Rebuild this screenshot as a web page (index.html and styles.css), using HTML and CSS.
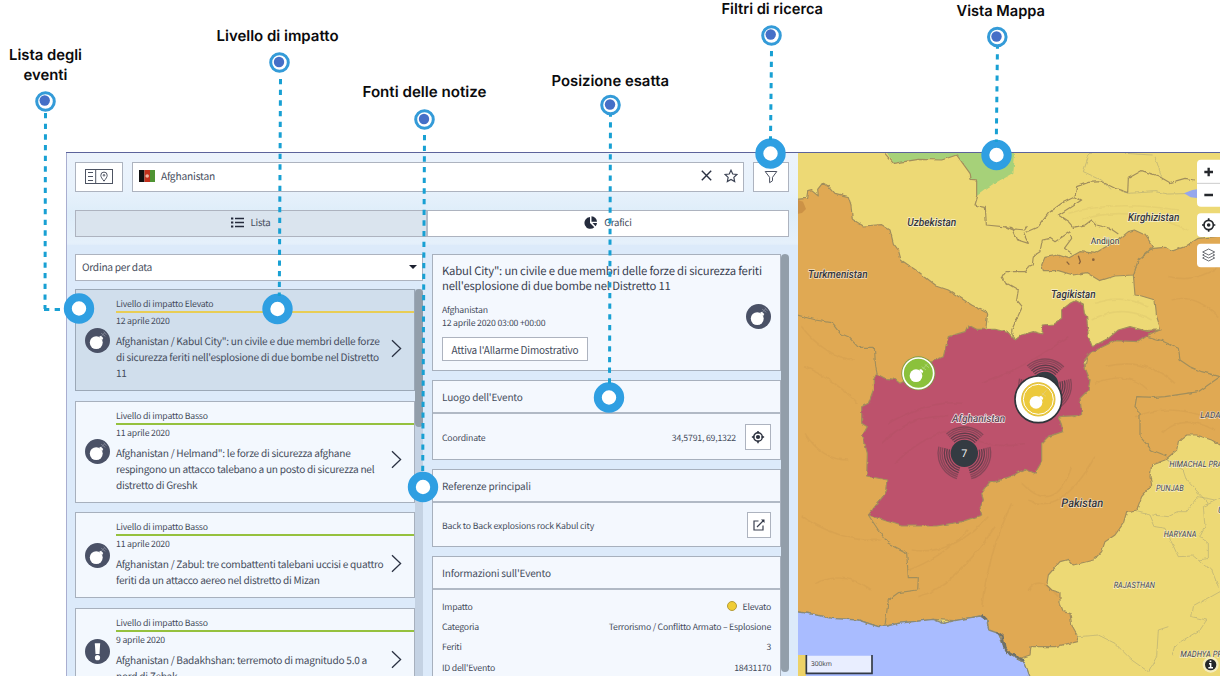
FILE: index.html
```html
<!DOCTYPE html>
<html lang="it">
<head>
<meta charset="utf-8">
<title>Mappa degli eventi</title>
<link rel="stylesheet" href="styles.css">
</head>
<body>
<svg class="defs" width="0" height="0">
  <symbol id="bomb" viewBox="0 0 24 24"><circle cx="12" cy="12" r="12" fill="#4a5166"/><circle cx="10.800" cy="14" r="6.200" fill="#fff"/><path d="M13.500 8.500l3 3 1-1.800-2.200-2.200z" fill="#fff"/><path d="M16 7.600l2.600-2.800M15.500 5l4 3M18 3.500l2.500 3" stroke="#7f8596" stroke-width=".9" fill="none"/></symbol>
  <symbol id="alert" viewBox="0 0 24 24"><circle cx="12" cy="12" r="12" fill="#4a5166"/><path d="M9.400 4h5.200l-.7 10.400h-3.800z" fill="#fff"/><circle cx="12" cy="17.900" r="2.500" fill="#fff"/></symbol>
  <symbol id="chevron" viewBox="0 0 11 19"><path d="M1 1.200l8.600 8.300L1 17.800" fill="none" stroke="#2a3142" stroke-width="1.300"/></symbol>
  <symbol id="target" viewBox="0 0 16 16"><circle cx="8" cy="8" r="4.900" fill="none" stroke="#2a2f3d" stroke-width="1.600"/><circle cx="8" cy="8" r="2.400" fill="#2a2f3d"/><path d="M8 1v3M8 12v3M1 8h3M12 8h3" stroke="#2a2f3d" stroke-width="1.700"/></symbol>
</svg>

<main class="app">
  <section class="panel">
    <div class="toolbar">
      <button class="box layout-btn"><svg width="28" height="15" viewBox="0 0 28 15" fill="none" stroke="#4d5362"><rect x=".5" y=".5" width="27" height="14"/><path d="M10.700 0v15M3 3.500h5M3 7.500h5M3 11.500h5"/><path d="M19 12.200C17 9.500 15.800 8 15.800 6.300a3.200 3.200 0 0 1 6.400 0C22.200 8 21 9.500 19 12.200z"/><circle cx="19" cy="6.300" r=".8"/></svg></button>
      <div class="box search">
        <svg class="flag" width="16" height="12" viewBox="0 0 16 12"><path fill="#111" d="M0 0h5.500v12H0z"/><path fill="#c3301c" d="M5.500 0h5.500v12H5.500z"/><path fill="#4f9433" d="M11 0h5v12h-5z"/><circle cx="8.200" cy="6" r="1.800" fill="#efb5a3"/></svg>
        <span>Afghanistan</span>
        <svg class="clear" width="11" height="11" viewBox="0 0 11 11"><path d="M.8.8l9.400 9.400M10.200.8L.8 10.200" stroke="#2a3142" stroke-width="1.400"/></svg>
        <svg width="14" height="14" viewBox="0 0 14 14"><path d="M7 1.200l1.750 3.800 4.100.5-3 2.850.8 4.150L7 10.400l-3.650 2.100.8-4.150-3-2.850 4.100-.5z" fill="none" stroke="#3c4354" stroke-width="1.200"/></svg>
      </div>
      <button class="box filter-btn"><svg width="14" height="14" viewBox="0 0 14 14"><path d="M1.200 1.500h11.600L8.500 7.300v3.500L5.600 12.700V7.300z" fill="none" stroke="#4a5060"/></svg></button>
    </div>
    <nav class="tabs">
      <div class="tab active"><svg width="13" height="11" viewBox="0 0 13 11"><path d="M4 1.500h9M4 5.500h9M4 9.500h9" stroke="#252b3c" stroke-width="1.500"/><path d="M0 1.500h2.300M0 5.500h2.300M0 9.500h2.300" stroke="#252b3c" stroke-width="2"/></svg><span>Lista</span></div>
      <div class="tab charts"><svg width="14" height="13" viewBox="0 0 14 13" fill="#252b3c"><path d="M6 1v6l4.300 4.300A5.900 5.900 0 1 1 6 1z"/><path d="M7.500.2A5.700 5.700 0 0 1 13 5.800H7.500z"/><path d="M8.500 7H13a5.500 5.500 0 0 1-1.500 3.200z"/></svg><span>Grafici</span></div>
    </nav>
    <div class="columns">
      <div class="list-col">
        <div class="box select"><span>Ordina per data</span><svg width="8" height="4" viewBox="0 0 8 4"><path d="M0 0h8L4 4z" fill="#1c2130"/></svg></div>
        <div class="list">
          <div class="cards">
            <article class="event selected"><svg class="ico" width="25" height="25"><use href="#bomb"/></svg>
              <div class="txt"><p class="level high">Livello di impatto Elevato</p><p class="date">12 aprile 2020</p><h3>Afghanistan / Kabul City": un civile e due membri delle forze<br>di sicurezza feriti nell'esplosione di due bombe nel Distretto<br>11</h3></div>
              <svg class="go" width="11" height="19"><use href="#chevron"/></svg></article>
            <article class="event"><svg class="ico" width="25" height="25"><use href="#bomb"/></svg>
              <div class="txt"><p class="level">Livello di impatto Basso</p><p class="date">11 aprile 2020</p><h3>Afghanistan / Helmand": le forze di sicurezza afghane<br>respingono un attacco talebano a un posto di sicurezza nel<br>distretto di Greshk</h3></div>
              <svg class="go" width="11" height="19"><use href="#chevron"/></svg></article>
            <article class="event"><svg class="ico" width="25" height="25"><use href="#bomb"/></svg>
              <div class="txt"><p class="level">Livello di impatto Basso</p><p class="date">11 aprile 2020</p><h3>Afghanistan / Zabul: tre combattenti talebani uccisi e quattro<br>feriti da un attacco aereo nel distretto di Mizan</h3></div>
              <svg class="go" width="11" height="19"><use href="#chevron"/></svg></article>
            <article class="event"><svg class="ico" width="25" height="25"><use href="#alert"/></svg>
              <div class="txt"><p class="level">Livello di impatto Basso</p><p class="date">9 aprile 2020</p><h3>Afghanistan / Badakhshan: terremoto di magnitudo 5.0 a<br>nord di Zebak</h3></div>
              <svg class="go" width="11" height="19"><use href="#chevron"/></svg></article>
          </div>
          <div class="track"><div class="thumb list-thumb"></div></div>
        </div>
      </div>
      <div class="detail-col">
        <div class="details">
          <section class="card summary">
            <h2>Kabul City": un civile e due membri delle forze di sicurezza feriti<br>nell'esplosione di due bombe nel Distretto 11</h2>
            <div class="meta"><p>Afghanistan<br>12 aprile 2020 03:00 +00:00</p><svg width="25" height="25"><use href="#bomb"/></svg></div>
            <button class="box alarm">Attiva l'Allarme Dimostrativo</button>
          </section>
          <section class="card group place">
            <h4>Luogo dell'Evento</h4>
            <div class="row"><span>Coordinate</span><span class="coord">34,5791, 69,1322</span><button class="box sq"><svg width="14" height="14"><use href="#target"/></svg></button></div>
          </section>
          <section class="card group refs">
            <h4>Referenze principali</h4>
            <div class="row"><span>Back to Back explosions rock Kabul city</span><button class="box sq ext"><svg width="12" height="12" viewBox="0 0 12 12" fill="none" stroke="#3a4050" stroke-width="1.200"><path d="M5.500 2H1v9h9V6.500M4 8l6.500-6.500"/><path d="M8 .5h3.500V4z" fill="#2a3142" stroke="none"/></svg></button></div>
          </section>
          <section class="card group info">
            <h4>Informazioni sull'Evento</h4>
            <dl>
              <div><dt>Impatto</dt><dd><i class="dot"></i>Elevato</dd></div>
              <div><dt>Categoria</dt><dd>Terrorismo / Conflitto Armato – Esplosione</dd></div>
              <div><dt>Feriti</dt><dd>3</dd></div>
              <div><dt>ID dell'Evento</dt><dd>18431170</dd></div>
            </dl>
          </section>
        </div>
        <div class="track clear-track"><div class="thumb detail-thumb"></div></div>
      </div>
    </div>
  </section>

  <section class="map">
    <svg width="422" height="523" viewBox="9 9 1266 1569">
      <defs>
        <filter id="rough" x="0" y="0" width="1" height="1" color-interpolation-filters="sRGB"><feTurbulence type="fractalNoise" baseFrequency=".045" numOctaves="3" seed="4" result="n"/><feDisplacementMap in="SourceGraphic" in2="n" scale="10" xChannelSelector="R" yChannelSelector="G"/></filter>
        <g id="waves"><circle r="46" pathLength="360"/><circle r="53" pathLength="360"/><circle r="60" pathLength="360"/><circle class="far" r="67" pathLength="360"/><circle class="far" r="73" pathLength="360"/><circle class="far" r="79" pathLength="360"/></g>
      </defs>
      <rect width="1300" height="1600" fill="#edd975"/>
      <g filter="url(#rough)" stroke="#a18e5c" stroke-width="3.500" stroke-linejoin="round">
        <rect x="-20" y="-20" width="1320" height="1620" fill="#edd975" stroke="none"/>
        <path fill="#a6d179" d="M265 -10L295 40 370 28 440 30 485 15 525 70 528 88 545 90 545 138 590 105 655 68 662 -10z" stroke="none"/>
        <path fill="none" d="M265 5L295 40 370 28 440 30 485 15 525 70 528 88 545 90 545 138 537 165 571 172 574 225 645 232 660 240M660 237L690 240 700 225"/>
        <path fill="#e0a953" d="M-20 150L35 145 38 125 50 122 70 138 68 118 82 100 104 112 120 130 160 140 168 165 172 208 205 228 260 224 285 240 295 280 310 300 318 330 370 365 425 408 460 420 530 465 578 490 572 540 600 700 840 800 880 600 960 556 1010 543 1085 540 1098 540 1085 500 1080 450 1040 438 1020 435 1015 375 1030 330 1075 295 1110 292 1135 302 1170 290 1210 265 1310 255 1310 905 1250 870 1205 855 1175 855 1150 875 1145 900 1110 930 1070 945 1065 980 1070 1005 1040 1040 1025 1080 995 1085 985 1120 960 1155 930 1175 920 1205 895 1230 835 1245 820 1228 795 1235 760 1275 755 1305 770 1320 795 1328 795 1360 805 1385 825 1390 830 1425 850 1460 845 1475 780 1490 708 1490 705 1515 660 1530 625 1500 582 1440 575 1410 555 1398 480 1412 415 1408 380 1412 310 1420 275 1428 250 1430 190 1410 110 1405 40 1390 -20 1383z"/>
        <path fill="#a9bcff" stroke="none" d="M-20 1383L40 1390 110 1405 190 1410 250 1430 275 1428 310 1420 380 1412 415 1408 445 1420 480 1412 555 1398 575 1410 582 1440 610 1450 625 1485 645 1515 690 1540 710 1600 -20 1600z"/>
        <path fill="none" stroke="#8a8a78" stroke-width="4" d="M-20 1383L40 1390 110 1405 190 1410 250 1430 275 1428 310 1420 380 1412 415 1408 445 1420 480 1412 555 1398 575 1410 582 1440 610 1450 625 1485 645 1515 690 1540 705 1580"/>
        <path fill="none" stroke="#6f7168" stroke-width="8" d="M560 1395L575 1410M605 1446L622 1458 628 1490 645 1512 688 1532"/>
        <path fill="#e0a953" d="M740 345L750 322 790 315 820 325 855 305 900 310 925 295 970 270 1000 245 1018 240 1050 255 1075 290 1030 330 1015 375 960 378 915 392 875 368 835 375 790 362 745 362z"/>
        <path fill="#bd526c" d="M220 1095L275 1025 278 990 215 978 217 910 203 855 217 830 200 820 200 770 220 760 235 720 235 690 245 672 270 685 300 688 315 700 335 690 400 640 445 620 460 560 510 545 520 525 545 538 600 538 640 548 660 570 680 555 715 545 740 552 745 525 775 522 800 505 800 480 825 460 840 452 865 465 868 490 875 500 880 560 892 590 940 565 970 540 1005 530 1060 545 1095 540 1060 555 1030 575 960 572 920 592 885 610 865 635 875 665 885 690 880 720 855 745 860 790 845 797 790 800 800 825 803 845 760 860 740 880 740 935 720 970 690 958 645 980 600 995 585 995 560 1030 565 1050 555 1075 560 1095 500 1115 425 1128 320 1128z"/>
        <g fill="none"><path d="M-10 490L60 510 110 518 135 550 160 560 190 592 238 592 242 650 247 675"/><path d="M220 1095L250 1140 280 1180 335 1208 340 1283 370 1283 368 1320 310 1328 280 1350 270 1425"/><path d="M630 365L690 365 700 350 712 345 715 318 735 305 742 270 765 265 780 275 825 245 830 265 808 295 830 310M630 230L655 240 668 270 700 280 685 250 730 230 760 190 800 160 840 140 860 150 790 195 820 215 835 232 870 225 890 210 905 225 945 235 970 252M840 140L845 110 880 97 920 95 960 115 998 128 1000 85 1040 62 1090 78 1125 98 1170 85 1200 90"/><path d="M635 400L670 420 665 450 682 470 650 540 660 570M1060 560L1100 572 1150 595 1155 630 1185 650 1220 665 1275 680M1275 680L1210 725 1110 740 1080 742 1025 740 1020 770 1035 785 1035 860 1070 900 1115 918M630 365L621 380 635 405"/></g>
        <g fill="none" stroke="#a39e77" stroke-width="2" opacity=".75"><path d="M890 9L880 20 865 65 920 90 945 118M985 125L1000 130 1080 125 1120 132 1210 130M990 10L1070 15M1080 20L1100 80"/><path d="M1025 1085L1065 1095 1080 1130 1110 1135 1150 1220 1195 1218 1210 1230 1240 1225 1240 1180 1215 1160 1230 1130 1225 1070 1275 1045M1075 1095L1120 1100 1150 1085 1175 1085 1195 1060 1210 1040 1260 1050M1115 930L1165 960 1175 990 1240 1060M1210 1230L1250 1260 1270 1310M850 1460L910 1455 960 1480 1010 1530 1060 1565 1085 1520 1090 1440 1120 1430M1275 1325L1195 1370 1190 1400 1235 1410 1215 1440 1140 1485 1130 1520"/></g>
      </g>
      <!-- Relief shading -->
      <g filter="url(#rough)" fill="none" stroke="#6b482e" opacity=".05" stroke-width="5"><path d="M30 650Q120 690 190 760M20 530Q90 620 180 630M30 850Q80 930 160 930M20 1100Q150 1180 260 1170M60 1300Q150 1260 230 1320M340 1260Q430 1230 520 1140M370 1340Q480 1310 600 1130M560 1370Q580 1210 650 1060M350 1200Q470 1220 580 1100M680 1000Q780 1100 830 950M700 1050Q800 1100 900 920M790 1340Q730 1270 700 1320M260 880Q350 790 460 800M280 820Q400 750 500 760M300 940Q400 840 520 830M560 700Q680 660 820 560M520 860Q600 900 690 880M900 700Q1000 660 1060 720M930 650Q1050 620 1140 700M900 460Q980 430 1060 470M890 510Q980 460 1070 510M820 190Q950 150 1150 180M860 210Q1000 160 1180 240M1020 800Q1120 760 1230 800M1100 850Q1160 790 1260 840M1120 380Q1200 400 1270 350M1130 450Q1200 430 1270 500"/></g>
      <path fill="#95a7ed" d="M1167 130l25-10 20-3v28l-25-3z"/><path fill="#cc9246" d="M9 150l15 5 9 22-12 12-12 2z"/><circle cx="895" cy="329" r="4" fill="#8a633c"/><path d="M850 317l6 18-4 7M815 335l8 9" stroke="#8a633c" stroke-width="4" fill="none"/>
      <path d="M9 1515h24v63H9z" fill="#edd267"/>

      <g class="country">
        <text x="337" y="227" textLength="147" lengthAdjust="spacingAndGlyphs">Uzbekistan</text><text x="39" y="384" textLength="179" lengthAdjust="spacingAndGlyphs">Turkmenistan</text><text x="999" y="212" textLength="154" lengthAdjust="spacingAndGlyphs">Kirghizistan</text><text x="768" y="444" textLength="134" lengthAdjust="spacingAndGlyphs">Tagikistan</text><text x="471" y="817" textLength="160" class="afg" lengthAdjust="spacingAndGlyphs">Afghanistan</text><text x="799" y="1070" textLength="126" class="pak" lengthAdjust="spacingAndGlyphs">Pakistan</text>
      </g>
      <text class="city" x="887" y="281" textLength="86" lengthAdjust="spacingAndGlyphs">Andijon</text>
      <g class="region">
        <text x="1216" y="803" textLength="93" lengthAdjust="spacingAndGlyphs">LADAKH</text><text x="1123" y="951" textLength="215" lengthAdjust="spacingAndGlyphs">HIMACHAL PRADESH</text><text x="1083" y="1024" textLength="83" lengthAdjust="spacingAndGlyphs">PUNJAB</text><text x="1106" y="1162" textLength="98" lengthAdjust="spacingAndGlyphs">HARYANA</text><text x="956" y="1315" textLength="124" lengthAdjust="spacingAndGlyphs">RAJASTHAN</text><text x="1156" y="1520" textLength="196" lengthAdjust="spacingAndGlyphs">MADHYA PRADESH</text><text x="1269" y="1088">U</text>
      </g>

      <g class="pulse" transform="translate(508 910)"><use href="#waves" transform="rotate(-14)"/><circle class="core" r="41"/><text x="0" y="10">7</text></g>
      <g class="pulse" transform="translate(750 706)"><use href="#waves" transform="rotate(-14)"/><circle class="core" r="41"/></g>
      <circle cx="370" cy="670" r="51" fill="#7f9d42"/><circle cx="370" cy="670" r="46" fill="#8bc13c" stroke="#fff" stroke-width="5"/><circle cx="363" cy="677" r="19" fill="#fff"/><path d="M372 660l10 10 3-6-7-7z" fill="#fff"/><path d="M383 657l15-16M380 650l13 10M389 643l13 10" stroke="#b0d67e" stroke-width="2.500"/>
      <circle cx="730" cy="748" r="70" fill="#fff" stroke="#30343a" stroke-width="5"/><circle cx="730" cy="748" r="50" fill="#ecc93c" stroke="#e0bd35" stroke-width="3"/><circle cx="730" cy="748" r="45" fill="none" stroke="#fff" stroke-width="3"/><circle cx="723" cy="757" r="19" fill="#fff"/><path d="M732 740l10 10 3-6-7-7z" fill="#fff"/><path d="M741 736l13-15M740 729l13 10" stroke="#e6cf7c" stroke-width="2.500"/>

      <path d="M33 1517h198v54H33z" fill="#fff" fill-opacity=".75"/><path d="M34 1515v55h197v-55" fill="none" stroke="#333a45" stroke-width="5"/><text class="scale" x="48" y="1549" textLength="63" lengthAdjust="spacingAndGlyphs">300km</text>
      <g fill="#fff"><rect x="1206" y="29" width="90" height="141" rx="12"/><rect x="1206" y="190" width="90" height="71" rx="12"/><rect x="1206" y="281" width="90" height="71" rx="12"/></g>
      <path d="M1206 100h80" stroke="#ccc" stroke-width="3"/><path d="M1228 66h26M1241 53v26M1228 135h26" stroke="#25282d" stroke-width="7"/>
      <g transform="translate(1241 225)" fill="none" stroke="#25282d" stroke-width="5"><circle r="14"/><circle r="3" fill="#25282d"/><path d="M0-20v7M0 20v-7M-20 0h7M20 0h-7"/></g>
      <g fill="none" stroke="#50545c" stroke-width="2.600"><path d="M1241 297l18 9-18 9-18-9z"/><path d="M1228 312l-5 3 18 9 18-9-5-3M1228 321l-5 3 18 9 18-9-5-3"/></g>
      <circle cx="1247" cy="1544" r="24" fill="#f5edbf"/><circle cx="1247" cy="1544" r="17" fill="#23262a"/><path d="M1242 1541h5v12M1240 1553h14M1244 1534h5" stroke="#fff" stroke-width="4.500" fill="none"/>
    </svg>
  </section>
</main>

<svg class="callouts" width="1225" height="682" viewBox="0 0 1225 682">
  <g class="rings"><circle cx="79" cy="308.500" r="11.200"/><circle cx="277.500" cy="309" r="11.200"/><circle cx="423" cy="487" r="11.200"/><circle cx="609" cy="397.500" r="11.200"/><circle cx="770.500" cy="153.500" r="11.200"/><circle cx="996.500" cy="155" r="11.200"/></g>
  <g class="lines"><path d="M45.500 113L45 309"/><path d="M44 309.500H64"/><path d="M280.500 79L279.300 296"/><path d="M424.500 135L422.700 472"/><path d="M610.500 111.500L609.500 384"/><path d="M771.500 51L770.500 140"/><path d="M997.500 43.500L996.300 142"/></g>
  <g class="pins"><circle cx="45.500" cy="101.500" r="8.800"/><circle cx="279.500" cy="62.500" r="8.800"/><circle cx="424.500" cy="119.500" r="8.800"/><circle cx="610.500" cy="105" r="8.800"/><circle cx="771.500" cy="35.500" r="8.800"/><circle cx="997.300" cy="37" r="8.800"/></g>
  <g class="cores"><circle cx="44.700" cy="100.500" r="5.200"/><circle cx="279" cy="62" r="5.200"/><circle cx="424" cy="119" r="5.200"/><circle cx="610" cy="104.500" r="5.200"/><circle cx="770.700" cy="34.500" r="5.200"/><circle cx="996.500" cy="36.500" r="5.200"/></g>
  <g class="labels"><text x="9" y="60" textLength="73" lengthAdjust="spacingAndGlyphs">Lista degli</text><text x="23.500" y="80" textLength="44" lengthAdjust="spacingAndGlyphs">eventi</text><text x="216.500" y="41" textLength="122" lengthAdjust="spacingAndGlyphs">Livello di impatto</text><text x="362.500" y="97" textLength="124" lengthAdjust="spacingAndGlyphs">Fonti delle notize</text><text x="551.500" y="86" textLength="117.500" lengthAdjust="spacingAndGlyphs">Posizione esatta</text><text x="721.500" y="14" textLength="101.500" lengthAdjust="spacingAndGlyphs">Filtri di ricerca</text><text x="956.500" y="16" textLength="88.500" lengthAdjust="spacingAndGlyphs">Vista Mappa</text></g>
</svg>
</body>
</html>
```
FILE: styles.css
```css
* { box-sizing: border-box; }
body { margin: 0; width: 1225px; height: 682px; overflow: hidden; position: relative; background: #fff; color: #454c5c; font-family: "Noto Sans CJK SC", "Open Sans", sans-serif; font-size: 10.2px; letter-spacing: -.18px; text-rendering: geometricPrecision; }
p, h2, h3, h4, dl, dd { margin: 0; font-weight: 400; }
button { font: inherit; letter-spacing: inherit; color: inherit; padding: 0; }
svg { flex: none; display: block; letter-spacing: 0; }
.defs { position: absolute; }
.app { display: flex; margin: 152px 5px 0 66px; height: 524px; overflow: hidden; border-top: 1px solid #5c639b; }
.panel { width: 732px; flex: none; display: flex; flex-direction: column; background: linear-gradient(#ecf3fc 0, #e8f2fc 35px, #deedf9 60px, #e5f0fb 90px, #dceafa 94px); border-left: 1px solid #a9aed0; }
.box { background: #fff; border: 1px solid #adb3bf; display: flex; align-items: center; justify-content: center; }
.toolbar { display: flex; padding: 9px 9px 0 8px; height: 39px; }
.layout-btn { width: 48px; margin-right: 9px; padding-bottom: 2px; }
.search { flex: 1; justify-content: flex-start; padding: 0 5px 3px 6px; margin-right: 9px; }
.search span { margin-left: 6px; }
.clear { margin: 0 12px 0 auto; }
.filter-btn { width: 36px; padding-bottom: 1px; }
.tabs { display: flex; margin: 18px 9px 0 8px; height: 27px; border: 1px solid #adb3bf; }
.tab { flex: 1 0 0; display: flex; align-items: center; justify-content: center; gap: 6px; padding: 0 0 3px; background: #fff; font-size: 9.600px; }
.tab.active { flex: 0 0 352px; background: #dae4ee; border-right: 2px solid #b3bcc9; }
.columns { display: flex; flex: 1; min-height: 0; margin-top: 8px; padding: 9px 9px 0 8px; background: #dceafa; gap: 9px; }
.list-col { width: 348px; display: flex; flex-direction: column; min-height: 0; }
.select { height: 27px; flex: none; justify-content: space-between; padding: 0 5px 2px 6px; margin-bottom: 8px; letter-spacing: -.28px; }
.list { display: flex; flex: 1; min-height: 0; overflow: hidden; }
.cards { width: 340px; flex: none; display: flex; flex-direction: column; gap: 9.700px; }
.event { flex: none; display: flex; align-items: center; border: 1px solid #a7b0bd; background: #f3f8fe; padding: 6px 0 9px 9px; }
.event.selected { background: #d0deec; border-color: #9ba8b7; }
.ico { margin: 3px 6px 0 0; }
.txt { flex: 1; min-width: 0; white-space: nowrap; }
.level { font-size: 8.700px; line-height: 15px; border-bottom: 2px solid #95c13e; }
.level.high { border-color: #e8cd55; }
.date { font-size: 8.700px; line-height: 16px; margin-bottom: 4px; }
.event h3 { font-size: 10.100px; line-height: 16px; letter-spacing: -.26px; }
.go { margin: 19px 12px 0 -23px; }
.track { width: 8px; flex: none; background: #c4d2e3; }
.thumb { width: 8px; background: #929eaa; border-radius: 4px; }
.list-thumb { height: 138px; }
.detail-col { flex: 1; display: flex; min-height: 0; min-width: 0; overflow: hidden; }
.details { flex: 1; min-width: 0; display: flex; flex-direction: column; gap: 9px; }
.clear-track { background: transparent; }
.detail-thumb { height: 418px; }
.card { flex: none; border: 1px solid #a7b0bd; background: #f4f8fe; white-space: nowrap; }
.summary { height: 117px; padding: 9px 9px 0; }
.summary h2 { font-size: 11.300px; line-height: 15px; color: #3a4150; }
.meta { display: flex; justify-content: space-between; align-items: center; font-size: 8.700px; line-height: 13px; padding-top: 1px; height: 43px; }
.alarm { width: 146px; height: 24px; font-size: 10px; }
.group h4 { height: 33px; line-height: 31px; padding-left: 9px; font-size: 10px; border-bottom: 2px solid #b1b9c5; }
.place { height: 80px; }
.refs { height: 78px; }
.info { height: 140px; }
.row { display: flex; align-items: center; justify-content: space-between; height: 46px; padding: 0 9px; font-size: 8.700px; }
.refs .row { height: 44px; }
.coord { margin: 0 9px 0 auto; }
.sq { width: 26px; height: 26px; }
.ext { width: 24px; }
dl { padding: 6px 9px 0; font-size: 8.700px; letter-spacing: -.22px; }
dl div { display: flex; justify-content: space-between; align-items: center; height: 20.400px; }
dd { display: flex; align-items: center; }
.dot { width: 10px; height: 10px; margin-right: 6px; border-radius: 50%; background: #f0cd36; border: 1px solid #b59c38; }
.map { width: 422px; }
.country text { font: italic 500 34px Roboto, sans-serif; fill: #35353a; stroke: #fff; stroke-opacity: .65; stroke-width: 4px; paint-order: stroke; }
.country .afg { font-size: 32px; fill: #624451; stroke-opacity: .9; }
.country .pak { font-size: 36px; }
.city { font: 27px Roboto, sans-serif; fill: #303238; stroke: #f9f3d2; stroke-width: 4px; paint-order: stroke; }
.region text { font: italic 26px Roboto, sans-serif; fill: #44444b; stroke: #fff; stroke-opacity: .6; stroke-width: 4px; paint-order: stroke; }
#waves circle { fill: none; stroke: #3a353d; stroke-width: 4px; stroke-opacity: .7; stroke-dasharray: 88 32; }
#waves .far { stroke-opacity: .4; }
.pulse .core { fill: #343b42; stroke: none; }
.pulse text { font: 32px "Open Sans", sans-serif; text-anchor: middle; fill: #fff; }
.scale { font: 20px "Open Sans", sans-serif; fill: #333; }
.callouts { position: absolute; left: 0; top: 0; }
.rings circle { fill: #fff; stroke: #2f9fe2; stroke-width: 8px; }
.lines path { fill: none; stroke: #18a0d3; stroke-width: 3px; stroke-dasharray: 5.300 5.370; }
.pins circle { fill: #fff; stroke: #349bd8; stroke-width: 3px; }
.cores circle { fill: #456fc7; }
.labels text { font: 600 15px Inter, Lato, sans-serif; fill: #0b0b0d; }
```
